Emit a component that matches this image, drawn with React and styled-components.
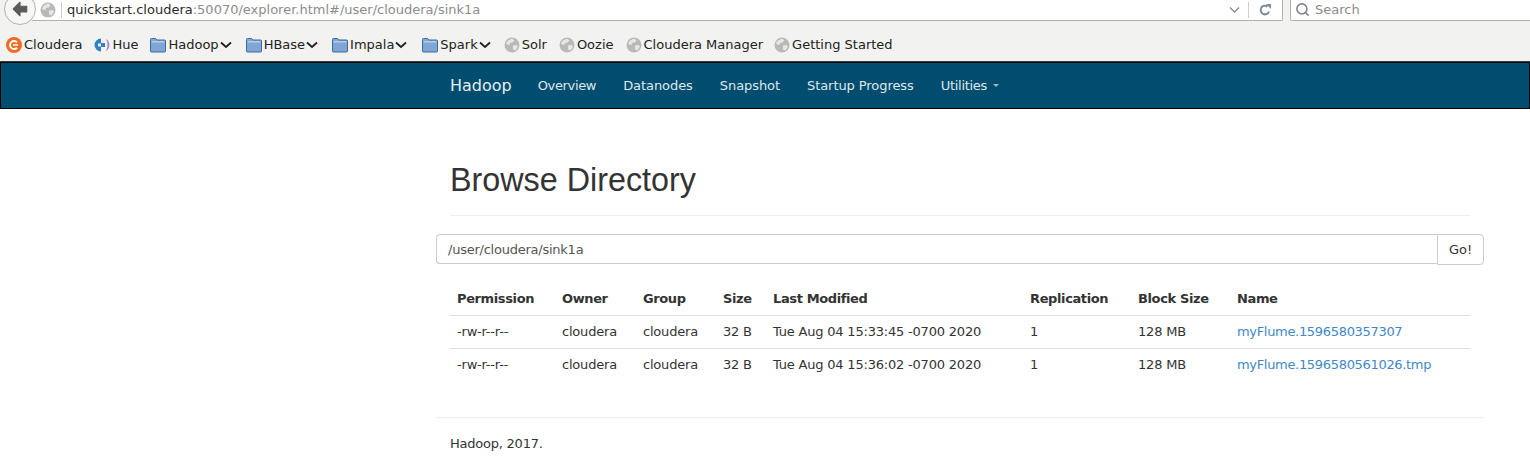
import React from 'react';
import styled, { createGlobalStyle } from 'styled-components';
import { Search } from 'lucide-react';

const GlobalStyle = createGlobalStyle`
  html, body {
    margin: 0;
    padding: 0;
    background: #fff;
  }
  body {
    font-family: "DejaVu Sans", sans-serif;
    overflow: hidden;
  }
`;

const Page = styled.div`
  width: 1530px;
  height: 468px;
  overflow: hidden;
`;

const Toolbar = styled.div`
  height: 62px;
  background: #f2f2f0;
  display: flex;
  flex-direction: column;
  box-sizing: border-box;
  border-bottom: 1px solid #3c3b37;
`;

const AddressRow = styled.div`
  height: 21px;
  display: flex;
  align-items: flex-start;
`;

const BackButton = styled.div`
  position: relative;
  z-index: 1;
  flex: none;
  width: 32px;
  height: 32px;
  margin: -7px 0 0 4px;
  box-sizing: border-box;
  border: 1px solid #b4b1ab;
  border-radius: 50%;
  background: #f7f7f6;
  display: flex;
  align-items: center;
  justify-content: center;
`;

const UrlBar = styled.div`
  flex: 1;
  margin-left: -4px;
  height: 21px;
  box-sizing: border-box;
  padding: 0 0 1px 8px;
  background: #fff;
  border: 1px solid #b4b1ab;
  border-width: 0 1px 1px 0;
  border-radius: 0 0 2px 0;
  display: flex;
  align-items: center;
`;

const IconSlot = styled.span`
  display: inline-flex;
  flex: none;
  margin-right: ${(props) => props.$gap || 0}px;
`;

const UrlDivider = styled.span`
  flex: none;
  width: 1px;
  height: 16px;
  background: #cfcdc9;
  margin: ${(props) => props.$margin};
`;

const UrlText = styled.div`
  flex: 1;
  font-size: 13px;
  color: #8c8c8c;
  white-space: nowrap;
`;

const UrlHost = styled.span`
  color: #2b2b2b;
`;

const SearchBox = styled.div`
  flex: none;
  width: 240px;
  height: 21px;
  box-sizing: border-box;
  margin-left: 7px;
  padding: 0 0 2px 4px;
  background: #fff;
  border-left: 1px solid #b4b1ab;
  border-bottom: 1px solid #b4b1ab;
  border-radius: 0 0 0 2px;
  display: flex;
  align-items: center;
  gap: 5px;
  font-size: 13px;
  color: #8b8b8b;
`;

const Bookmarks = styled.div`
  flex: 1;
  display: flex;
  align-items: center;
  padding: 7px 0 0 6px;
`;

const Bookmark = styled.div`
  display: flex;
  align-items: center;
  margin-right: ${(props) => props.$gap}px;
  font-size: 13px;
  color: #222;
  white-space: nowrap;
`;

const BookmarkIcon = styled.span`
  display: inline-flex;
  flex: none;
  margin-right: 2px;
`;

const MenuArrow = styled.svg`
  flex: none;
  margin-left: 1px;
`;

const Navbar = styled.nav`
  height: 47px;
  box-sizing: border-box;
  background: #004d6f;
  border: 1px solid #000;
  border-top-color: #0a0a0a;
  display: flex;
  align-items: center;
  padding-left: 449px;
  color: #e6edf0;
`;

const Brand = styled.a`
  font-size: 16px;
  color: #e4edf1;
  margin-right: 26px;
`;

const NavItem = styled.a`
  font-size: 13px;
  color: #dfe8ec;
  letter-spacing: ${(props) => props.$spacing || -0.07}px;
  margin-right: 27px;
  display: inline-flex;
  align-items: center;
`;

const Caret = styled.span`
  width: 0;
  height: 0;
  margin-left: 6px;
  border-top: 3px solid #9db5c1;
  border-left: 3px solid transparent;
  border-right: 3px solid transparent;
`;

const Container = styled.main`
  width: 1048px;
  margin-left: 436px;
`;

const PageHeader = styled.div`
  margin: 0 14px 0 14px;
  padding: 49px 0 13px;
  border-bottom: 1px solid #eee;
`;

const Title = styled.h1`
  margin: 0;
  font-family: "Liberation Sans", Arial, sans-serif;
  font-weight: 400;
  font-size: 32.3px;
  line-height: 44px;
  color: #333;
`;

const PathForm = styled.div`
  margin-top: 18px;
  display: flex;
`;

const PathInput = styled.div`
  flex: 1;
  height: 30px;
  box-sizing: border-box;
  padding-left: 11px;
  border: 1px solid #ccc;
  border-right: 0;
  border-radius: 4px 0 0 4px;
  display: flex;
  align-items: center;
  font-size: 13px;
  letter-spacing: -0.24px;
  color: #555;
`;

const GoButton = styled.button`
  width: 47px;
  height: 31px;
  padding: 0;
  background: #fff;
  border: 1px solid #ccc;
  border-radius: 0 4px 4px 0;
  font-family: inherit;
  font-size: 13px;
  color: #333;
`;

const Table = styled.table`
  width: 1020px;
  margin: 17px 0 0 14px;
  border-collapse: collapse;
  table-layout: fixed;
  font-size: 13px;
  letter-spacing: -0.2px;
  color: #333;
`;

const Th = styled.th`
  width: ${(props) => props.$width}px;
  height: 33px;
  padding: 0 0 0 7px;
  text-align: left;
  font-weight: 700;
  letter-spacing: -0.38px;
  border-bottom: 1px solid #ddd;
  box-sizing: border-box;
`;

const Td = styled.td`
  height: 33px;
  padding: 0 0 0 7px;
  border-bottom: 1px solid #ddd;
  box-sizing: border-box;
  white-space: nowrap;

  tr:last-child > & {
    border-bottom: 0;
  }
`;

const FileLink = styled.a`
  color: #3f88c9;
  letter-spacing: -0.32px;
  text-decoration: none;
`;

const Footer = styled.footer`
  margin-top: 36px;
  padding: 17px 0 0 14px;
  border-top: 1px solid #eee;
  font-size: 13px;
  letter-spacing: -0.23px;
  line-height: 18px;
  color: #333;
`;

const GlobeIcon = () => (
  <svg width="16" height="16" viewBox="0 0 16 16">
    <circle cx="8" cy="8" r="7.5" fill="#b9b9b7" />
    <path d="M4 3.5 8 1.5l2.5 2-2 2-2.5.5-.5 2L3 7.5 2 6z" fill="#e6e6e4" />
    <path d="M9 8.5l3.5-.5 1.5 1.5-2.5 4-2.5-1z" fill="#e6e6e4" />
  </svg>
);

const FolderIcon = () => (
  <svg width="16" height="16" viewBox="0 0 16 16">
    <path d="M.5 2.5A1 1 0 0 1 1.5 1.5h4L7 3h7.5a1 1 0 0 1 1 1v10a1 1 0 0 1-1 1h-13a1 1 0 0 1-1-1z" fill="#7fa6d4" stroke="#41689a" />
    <path d="M1.5 4h13v1.5h-13z" fill="#b4cdea" />
  </svg>
);

const ClouderaIcon = () => (
  <svg width="16" height="16" viewBox="0 0 16 16">
    <circle cx="8" cy="8" r="8" fill="#f26a22" />
    <path d="M11 5.3A4 4 0 1 0 11 10.7" fill="none" stroke="#fff" strokeWidth="2" />
    <path d="M7 8h5" stroke="#fff" strokeWidth="1.6" />
  </svg>
);

const HueIcon = () => (
  <svg width="16" height="16" viewBox="0 0 16 16">
    <path d="M7 1.5A6.5 6.5 0 0 0 7 14.5V10H11V6H7z" fill="#2f82c4" />
    <path d="M4 6.5h3v3H4z" fill="#f2f2f0" />
    <path d="M12 2a7 7 0 0 1 0 12c1-2 1.5-4 1.5-6S13 4 12 2z" fill="#a883c6" />
  </svg>
);

const BackArrow = () => (
  <svg width="18" height="18" viewBox="0 0 16 16">
    <path d="M8 2 2 8l6 6V10.5h6v-5H8z" fill="#5a5a5a" stroke="#5a5a5a" strokeLinejoin="round" />
  </svg>
);

const ReloadIcon = () => (
  <svg width="14" height="14" viewBox="0 0 14 14">
    <path d="M11 8.5A4.3 4.3 0 1 1 9.5 3.6" fill="none" stroke="#7d8a99" strokeWidth="2" />
    <path d="M8 1h5v5z" fill="#7d8a99" />
  </svg>
);

const SmallChevron = ({ width, color, stroke }) => (
  <MenuArrow width={width} height="8" viewBox={`0 0 ${width} 8`}>
    <path d={`M1 1.5 ${width / 2} 6 ${width - 1} 1.5`} fill="none" stroke={color} strokeWidth={stroke} />
  </MenuArrow>
);

const bookmarks = [
  { label: 'Cloudera', icon: <ClouderaIcon />, gap: 12 },
  { label: 'Hue', icon: <HueIcon />, gap: 12 },
  { label: 'Hadoop', icon: <FolderIcon />, menu: true, gap: 14 },
  { label: 'HBase', icon: <FolderIcon />, menu: true, gap: 14 },
  { label: 'Impala', icon: <FolderIcon />, menu: true, gap: 15 },
  { label: 'Spark', icon: <FolderIcon />, menu: true, gap: 13 },
  { label: 'Solr', icon: <GlobeIcon />, gap: 12 },
  { label: 'Oozie', icon: <GlobeIcon />, gap: 12 },
  { label: 'Cloudera Manager', icon: <GlobeIcon />, gap: 11 },
  { label: 'Getting Started', icon: <GlobeIcon />, gap: 0 },
];

const columns = [
  ['Permission', 105],
  ['Owner', 81],
  ['Group', 80],
  ['Size', 50],
  ['Last Modified', 257],
  ['Replication', 108],
  ['Block Size', 99],
  ['Name', 240],
];

const files = [
  ['-rw-r--r--', 'cloudera', 'cloudera', '32 B', 'Tue Aug 04 15:33:45 -0700 2020', '1', '128 MB', 'myFlume.1596580357307'],
  ['-rw-r--r--', 'cloudera', 'cloudera', '32 B', 'Tue Aug 04 15:36:02 -0700 2020', '1', '128 MB', 'myFlume.1596580561026.tmp'],
];

export default function App() {
  return (
    <Page>
      <GlobalStyle />
      <Toolbar>
        <AddressRow>
          <BackButton>
            <BackArrow />
          </BackButton>
          <UrlBar>
            <IconSlot>
              <GlobeIcon />
            </IconSlot>
            <UrlDivider $margin="0 5px 0 5px" />
            <UrlText>
              <UrlHost>quickstart.cloudera</UrlHost>:50070/explorer.html#/user/cloudera/sink1a
            </UrlText>
            <IconSlot>
              <SmallChevron width={11} color="#8a8f94" stroke={1.5} />
            </IconSlot>
            <UrlDivider $margin="0 9px 0 8px" />
            <IconSlot $gap={10}>
              <ReloadIcon />
            </IconSlot>
          </UrlBar>
          <SearchBox>
            <Search size={15} color="#85888c" strokeWidth={2.6} />
            Search
          </SearchBox>
        </AddressRow>
        <Bookmarks>
          {bookmarks.map((b) => (
            <Bookmark key={b.label} $gap={b.gap}>
              <BookmarkIcon>{b.icon}</BookmarkIcon>
              {b.label}
              {b.menu && <SmallChevron width={12} color="#222" stroke={1.8} />}
            </Bookmark>
          ))}
        </Bookmarks>
      </Toolbar>
      <Navbar>
        <Brand>Hadoop</Brand>
        <NavItem $spacing={-0.35}>Overview</NavItem>
        <NavItem>Datanodes</NavItem>
        <NavItem>Snapshot</NavItem>
        <NavItem>Startup Progress</NavItem>
        <NavItem $spacing={-0.3}>
          Utilities
          <Caret />
        </NavItem>
      </Navbar>
      <Container>
        <PageHeader>
          <Title>Browse Directory</Title>
        </PageHeader>
        <PathForm>
          <PathInput>/user/cloudera/sink1a</PathInput>
          <GoButton>Go!</GoButton>
        </PathForm>
        <Table>
          <thead>
            <tr>
              {columns.map(([label, width]) => (
                <Th key={label} $width={width}>
                  {label}
                </Th>
              ))}
            </tr>
          </thead>
          <tbody>
            {files.map((row) => (
              <tr key={row[7]}>
                {row.map((cell, i) => (
                  <Td key={i}>{i === 7 ? <FileLink>{cell}</FileLink> : cell}</Td>
                ))}
              </tr>
            ))}
          </tbody>
        </Table>
        <Footer>Hadoop, 2017.</Footer>
      </Container>
    </Page>
  );
}
